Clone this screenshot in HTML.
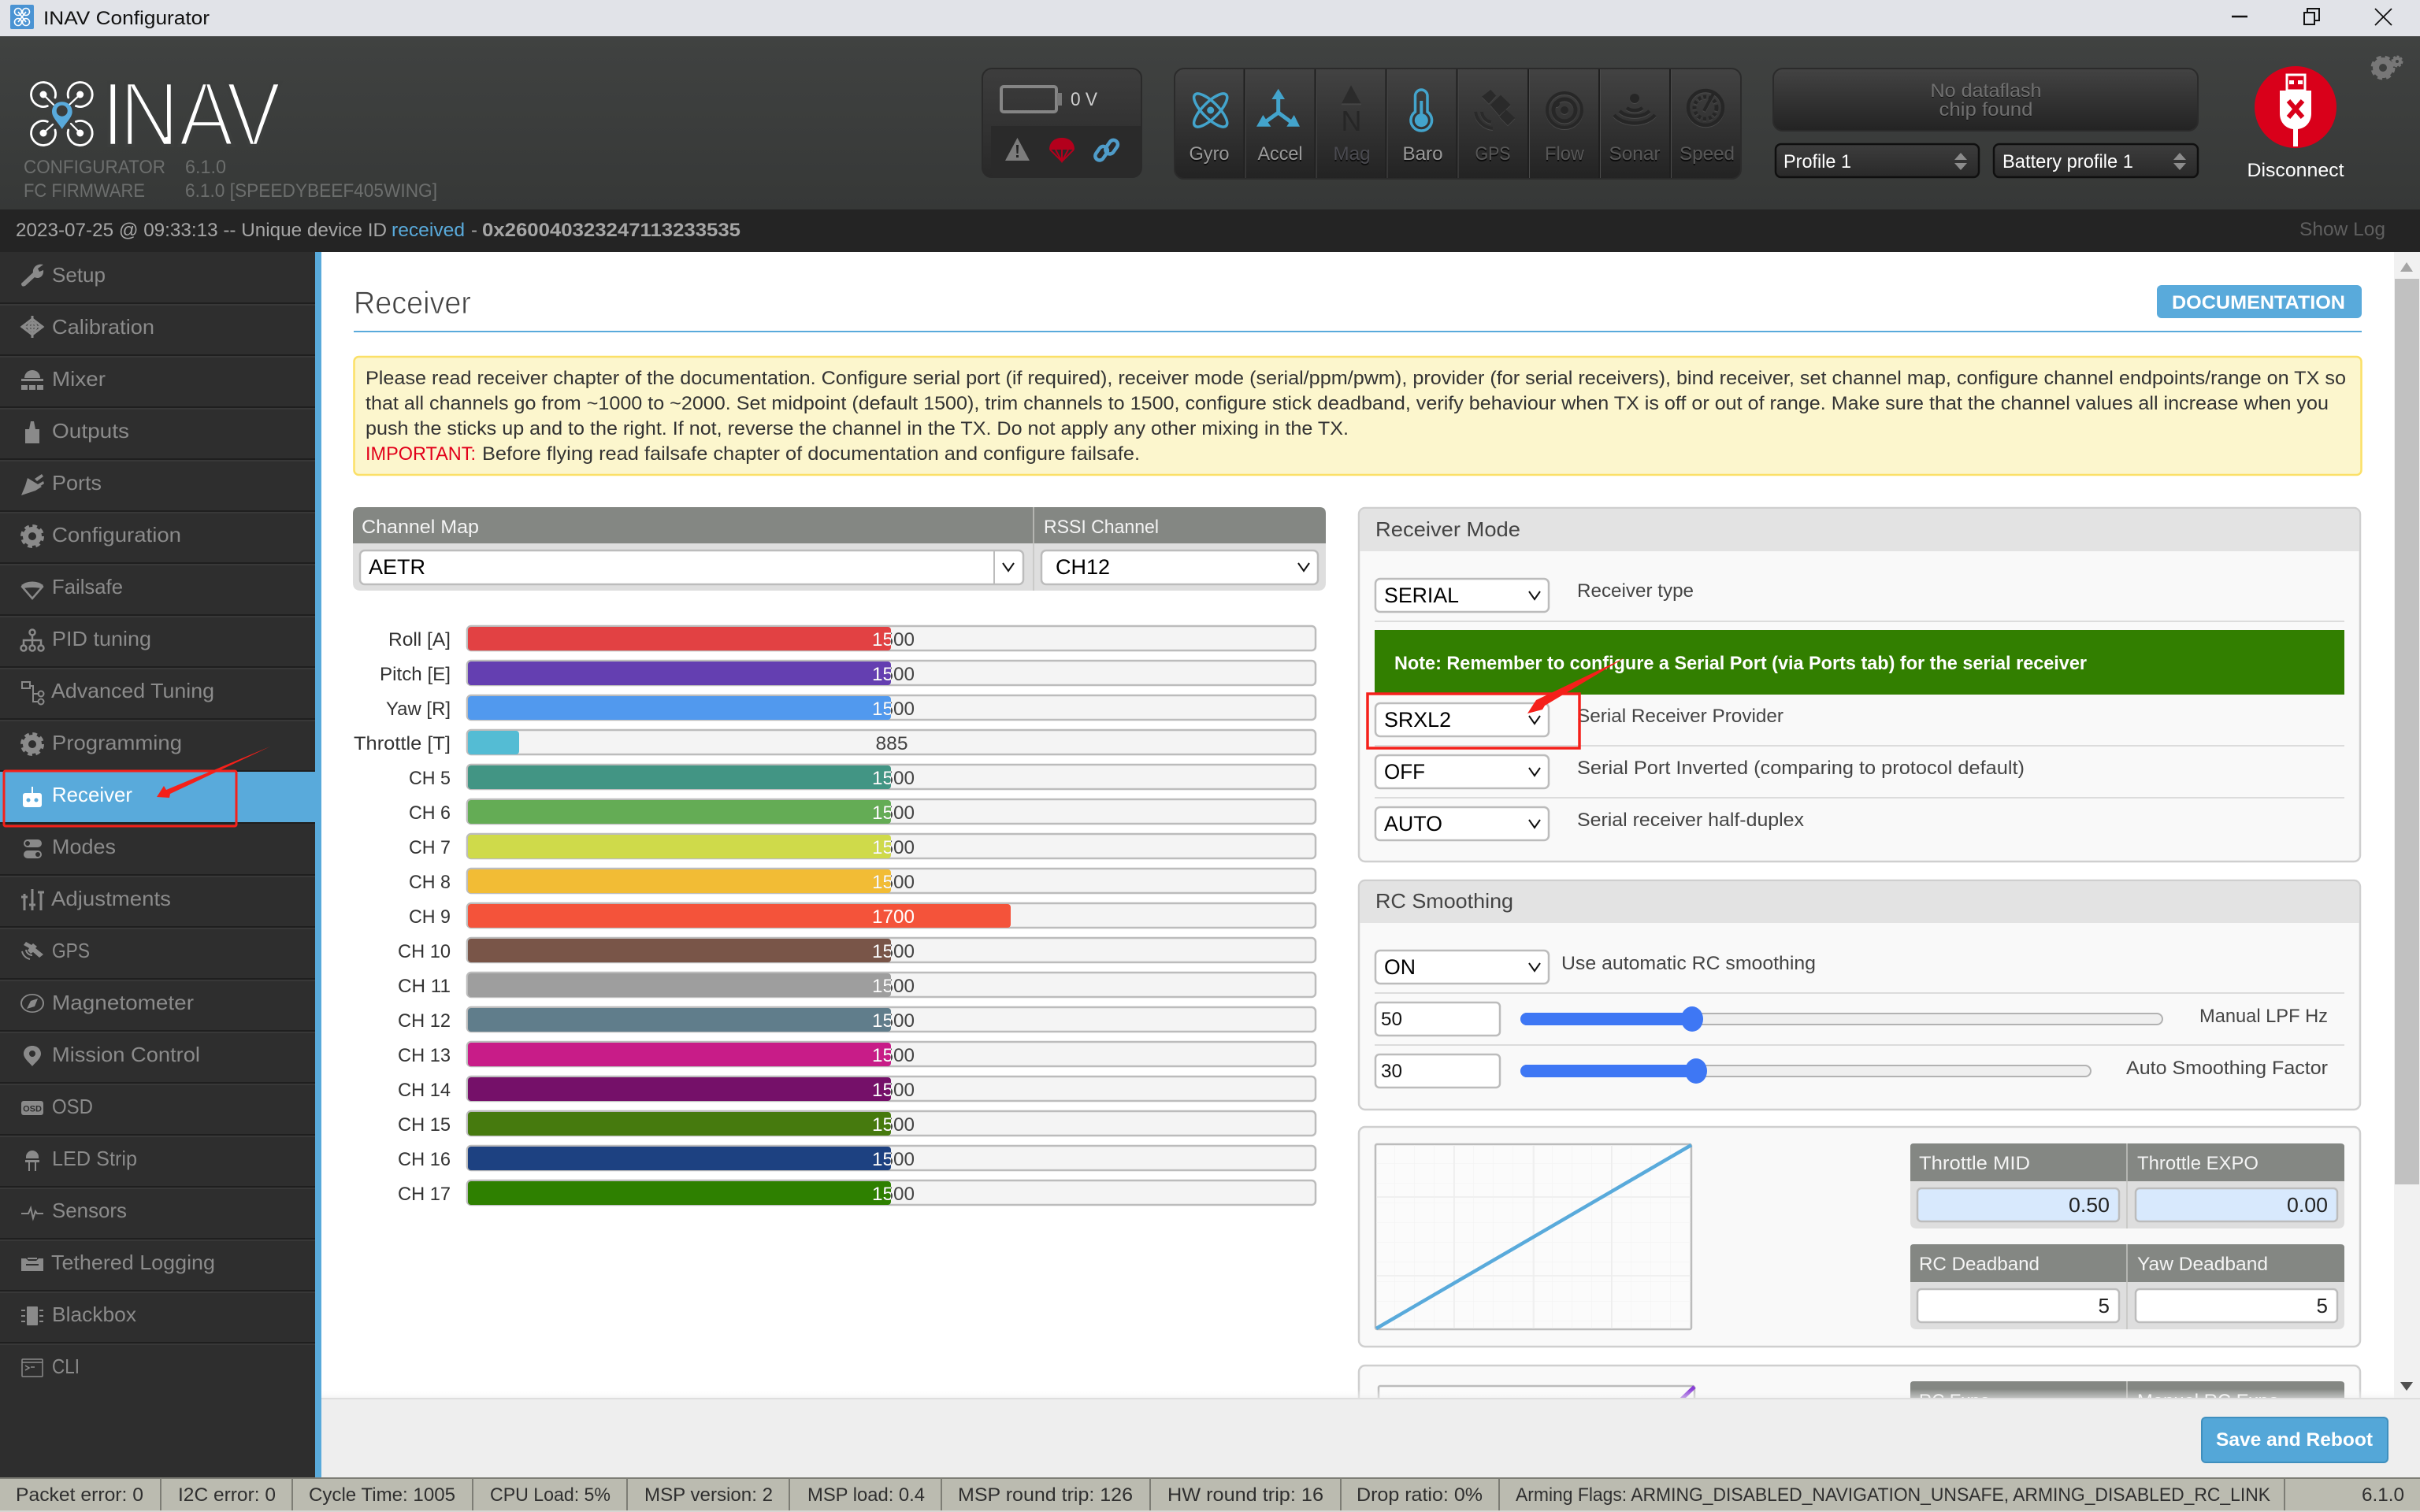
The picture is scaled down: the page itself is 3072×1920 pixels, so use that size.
<!DOCTYPE html>
<html><head><meta charset="utf-8"><title>INAV Configurator</title>
<style>
html,body{margin:0;padding:0;background:#fff;width:3072px;height:1920px;overflow:hidden}
svg{display:block;font-family:"Liberation Sans",sans-serif}
.s{fill:#8b8b8b;font-size:26px}
.n{fill:#333;font-size:24px}
.st{fill:#2f2f2f;font-size:24px}
.hd{fill:#f4f4f4;font-size:24px}
.sel{fill:#000;font-size:27px}
.lab{fill:#444;font-size:24px}
.box{fill:#fff;stroke:#bcbcbc;stroke-width:2.5}
.val{fill:#444;font-size:24px}
</style></head><body>
<svg width="3072" height="1920" viewBox="0 0 3072 1920" xmlns="http://www.w3.org/2000/svg">
<defs>
<linearGradient id="hdr" x1="0" y1="0" x2="0" y2="1"><stop offset="0" stop-color="#404241"/><stop offset="1" stop-color="#363837"/></linearGradient>
<linearGradient id="g1" x1="0" y1="0" x2="0" y2="1"><stop offset="0" stop-color="#434343"/><stop offset="1" stop-color="#232323"/></linearGradient>
<linearGradient id="g2" x1="0" y1="0" x2="0" y2="1"><stop offset="0" stop-color="#3d3d3d"/><stop offset="1" stop-color="#292929"/></linearGradient>
<linearGradient id="fade" x1="0" y1="0" x2="0" y2="1"><stop offset="0" stop-color="#fff" stop-opacity="0"/><stop offset="1" stop-color="#eee" stop-opacity=".6"/></linearGradient>
<path id="chev" d="M-7 -5 L0 5 L7 -5" fill="none" stroke="#111" stroke-width="2"/>
<clipPath id="fill50"><rect x="0" y="0" width="1131" height="1920"/></clipPath>
<pattern id="grid" width="25" height="25" patternUnits="userSpaceOnUse" x="1745" y="1452"><path d="M25 0H0V25" fill="none" stroke="#f2f2f2" stroke-width="1"/></pattern>
</defs>

<!-- title bar -->
<rect width="3072" height="46" fill="#e1e3e8"/>
<rect x="13" y="6" width="30" height="31" rx="2" fill="#4a93d3"/>
<g fill="none" stroke="#fff" stroke-width="1.6"><circle cx="23" cy="15" r="4.5"/><circle cx="33" cy="15" r="4.5"/><circle cx="23" cy="28" r="4.5"/><circle cx="33" cy="28" r="4.5"/><path d="M23 15L33 28M33 15L23 28"/></g>
<text x="55" y="31" font-size="24" fill="#111" textLength="211" lengthAdjust="spacingAndGlyphs">INAV Configurator</text>
<path d="M2833 21H2853" stroke="#111" stroke-width="2.5"/>
<path d="M2925 16H2938V31H2925ZM2929 16V11H2944V26H2938" fill="none" stroke="#111" stroke-width="2"/>
<path d="M3015 11L3036 32M3036 11L3015 32" stroke="#111" stroke-width="1.8"/>

<!-- header -->
<rect y="46" width="3072" height="221" fill="url(#hdr)"/>
<rect y="266" width="3072" height="54" fill="#242424"/>

<!-- logo -->
<g fill="none" stroke="#fff" stroke-width="2.8" stroke-linecap="round">
<path d="M70 124A15.500 15.500 0 1 0 60.300 134.600"/>
<path d="M86.700 124A15.500 15.500 0 1 1 96.400 134.600"/>
<path d="M70 165A15.500 15.500 0 1 1 60.300 154.400"/>
<path d="M86.700 165A15.500 15.500 0 1 0 96.400 154.400"/>
<path d="M55 120L68 133M101.700 120L88 133M55 169L67 158M101.700 169L90 157" stroke-width="2.200"/>
</g>
<g fill="#fff"><circle cx="55" cy="120" r="4.500"/><circle cx="101.700" cy="120" r="4.500"/><circle cx="55" cy="169" r="4.500"/><circle cx="101.700" cy="169" r="4.500"/></g>
<path d="M78.800 129.300C71 129.300 66 135 66 142C66 149 74 156 78.800 164C83.600 156 91.700 149 91.700 142C91.700 135 86.600 129.300 78.800 129.300Z" fill="#59aadb"/>
<circle cx="78.700" cy="140.700" r="7" fill="#3a3c3b"/>
<text transform="scale(.9,1)" x="143.100 168.700 252.200 318.900" y="185" font-size="116" fill="#fff" stroke="#3c3e3d" stroke-width="4.500">INAV</text>

<g font-size="24" fill="#6c6e6d">
<text x="30" y="220" textLength="180" lengthAdjust="spacingAndGlyphs">CONFIGURATOR</text>
<text x="235" y="220" textLength="52" lengthAdjust="spacingAndGlyphs">6.1.0</text>
<text x="30" y="250" textLength="154" lengthAdjust="spacingAndGlyphs">FC FIRMWARE</text>
<text x="235" y="250" textLength="320" lengthAdjust="spacingAndGlyphs">6.1.0 [SPEEDYBEEF405WING]</text>
</g>
<g font-size="24" fill="#a6a6a6">
<text x="20" y="300" textLength="471" lengthAdjust="spacingAndGlyphs">2023-07-25 @ 09:33:13 -- Unique device ID</text>
<text x="497" y="300" fill="#59aadb" textLength="93" lengthAdjust="spacingAndGlyphs">received</text>
<text x="598" y="300">-</text>
<text x="612" y="300" font-weight="bold" textLength="328" lengthAdjust="spacingAndGlyphs">0x260040323247113233535</text>
</g>

<!-- battery box -->
<rect x="1247" y="87" width="202" height="138" rx="12" fill="url(#g2)" stroke="#2a2a2a" stroke-width="2"/>
<path d="M1258 160H1448V214Q1448 224 1438 224H1264Q1258 224 1258 214Z" fill="#2a2a2a"/>
<rect x="1271" y="110" width="70" height="32" rx="3" fill="none" stroke="#858585" stroke-width="4"/>
<rect x="1342" y="118" width="6" height="16" fill="#777"/>
<text x="1359" y="134" font-size="24" fill="#cfcfcf" textLength="34" lengthAdjust="spacingAndGlyphs">0 V</text>
<path d="M1291.500 175L1307 204H1276Z" fill="#7c7c7c"/><path d="M1290 184h3l-.5 11h-2zM1290 197h3v3h-3z" fill="#222"/>
<path d="M1332 190C1332 180 1339 175 1348 175C1357 175 1364 180 1364 190Z" fill="#b3001c"/>
<path d="M1333 190L1348 205L1363 190M1340 190L1348 205L1356 190M1348 190V205" stroke="#b3001c" stroke-width="2" fill="none"/>
<g fill="none" stroke="#4f9cc9" stroke-width="4.500"><rect x="1406" y="177" width="11" height="19" rx="5.500" transform="rotate(35 1411 186)"/><rect x="1393" y="185" width="11" height="19" rx="5.500" transform="rotate(35 1398 194)"/></g>

<!-- sensors box -->
<rect x="1491" y="87" width="719" height="140" rx="12" fill="url(#g1)" stroke="#2b2b2b" stroke-width="2"/>
<path d="M1579.500 88V226M1669.500 88V226M1759.500 88V226M1849.500 88V226M1940 88V226M2030 88V226M2120 88V226" stroke="#1f1f1f" stroke-width="2"/>
<path d="M1581 88V226M1671 88V226M1761 88V226M1851 88V226M1941.500 88V226M2031.500 88V226M2121.500 88V226" stroke="#4a4a4a" stroke-width="1"/>
<!-- gyro -->
<g fill="none" stroke="#43a4cc" stroke-width="3.500"><ellipse cx="1536.700" cy="140" rx="10" ry="28" transform="rotate(-45 1536.700 140)"/><ellipse cx="1536.700" cy="140" rx="10" ry="28" transform="rotate(45 1536.700 140)"/></g>
<circle cx="1536.700" cy="140" r="8" fill="#363636"/><circle cx="1536.700" cy="140" r="4.500" fill="#43a4cc"/>
<!-- accel -->
<path d="M1622.700 112.700L1631 126H1614.400Z" fill="#43a4cc"/>
<path d="M1622.700 124V143L1606 155M1622.700 143L1639 155" fill="none" stroke="#43a4cc" stroke-width="5"/>
<path d="M1595 160.700H1613.300L1603.300 146ZM1650 160.700H1633.300L1642.700 146Z" fill="#43a4cc"/>
<!-- mag -->
<path d="M1715 108.300L1727.300 131H1703.300Z" fill="#2b2b2b"/><path d="M1703 132.500H1728" stroke="#454545" stroke-width="1.500"/>
<text x="1715.500" y="166" font-size="36" text-anchor="middle" fill="#262626">N</text>
<!-- baro -->
<path d="M1796.500 141.900V121.800A7.750 7.750 0 0 1 1812 121.800V141.900A13.300 13.300 0 1 1 1796.500 141.900Z" fill="none" stroke="#43a4cc" stroke-width="3.500"/>
<rect x="1802.300" y="128" width="4" height="20" fill="#43a4cc"/><circle cx="1804.300" cy="152.700" r="8.500" fill="#43a4cc"/>
<g style="filter:drop-shadow(0 1px 0 #4a4a4a)">
<!-- gps -->
<g fill="#2a2a2a"><path d="M1892.300 114L1899.300 121.700L1890 131.700L1881 122.700Z"/><path d="M1905 120.700L1917.700 133.300L1903.300 146.700L1891.700 133.300Z"/><path d="M1911.700 139.300L1923.300 150L1914 159.300L1903.300 148.300Z"/></g>
<path d="M1873 142A24 24 0 0 0 1895 163M1881 142A14 14 0 0 0 1893 155" fill="none" stroke="#2a2a2a" stroke-width="4"/>
<!-- flow -->
<g fill="none" stroke="#272727"><circle cx="1986" cy="140" r="22" stroke-width="4"/><circle cx="1986" cy="140" r="14" stroke-width="5"/></g><circle cx="1986" cy="140" r="5" fill="#272727"/><circle cx="1976" cy="132" r="4" fill="#272727"/>
<!-- sonar -->
<circle cx="2075" cy="125" r="6" fill="#262626"/>
<g fill="none" stroke="#262626" stroke-width="4.500"><path d="M2065 137A14 11 0 0 0 2085 137"/><path d="M2056 141A24 17 0 0 0 2094 141"/><path d="M2049 146A30 21 0 0 0 2101 146"/></g>
<!-- speed -->
<circle cx="2165" cy="137" r="22" fill="none" stroke="#262626" stroke-width="4.500"/><circle cx="2165" cy="137" r="14" fill="none" stroke="#262626" stroke-width="5" stroke-dasharray="4 3"/><path d="M2163 141L2175 119" stroke="#262626" stroke-width="4"/>
</g>
<g style="filter:drop-shadow(0 2px 0 #0b0b0b)" font-size="24" text-anchor="middle">
<text x="1535" y="203" fill="#9a9a9a" textLength="51" lengthAdjust="spacingAndGlyphs">Gyro</text>
<text x="1625" y="203" fill="#9a9a9a" textLength="57" lengthAdjust="spacingAndGlyphs">Accel</text>
<text x="1716" y="203" fill="#4a4a50" textLength="47" lengthAdjust="spacingAndGlyphs">Mag</text>
<text x="1806" y="203" fill="#9a9a9a" textLength="51" lengthAdjust="spacingAndGlyphs">Baro</text>
<text x="1895" y="203" fill="#575757" textLength="45" lengthAdjust="spacingAndGlyphs">GPS</text>
<text x="1986" y="203" fill="#575757" textLength="50" lengthAdjust="spacingAndGlyphs">Flow</text>
<text x="2075" y="203" fill="#575757" textLength="65" lengthAdjust="spacingAndGlyphs">Sonar</text>
<text x="2167" y="203" fill="#575757" textLength="70" lengthAdjust="spacingAndGlyphs">Speed</text>
</g>

<!-- dataflash -->
<rect x="2251" y="87" width="539" height="79" rx="12" fill="url(#g1)" stroke="#2b2b2b" stroke-width="2"/>
<g font-size="24" fill="#707070" text-anchor="middle" style="filter:drop-shadow(0 1px 0 #111)">
<text x="2521" y="123" textLength="141" lengthAdjust="spacingAndGlyphs">No dataflash</text>
<text x="2521" y="147" textLength="119" lengthAdjust="spacingAndGlyphs">chip found</text>
</g>
<!-- profile selects -->
<rect x="2254" y="183" width="258" height="42" rx="7" fill="url(#g2)" stroke="#0f0f0f" stroke-width="2.500"/>
<rect x="2531" y="183" width="259" height="42" rx="7" fill="url(#g2)" stroke="#0f0f0f" stroke-width="2.500"/>
<g font-size="24" fill="#fff">
<text x="2264" y="213" textLength="86" lengthAdjust="spacingAndGlyphs">Profile 1</text>
<text x="2542" y="213" textLength="166" lengthAdjust="spacingAndGlyphs">Battery profile 1</text>
</g>
<path d="M2489 194L2497 203H2481ZM2489 216L2497 207H2481ZM2767 194L2775 203H2759ZM2767 216L2775 207H2759Z" fill="#8c8c8c"/>
<!-- disconnect -->
<circle cx="2914" cy="136" r="52" fill="#d9001a"/>
<rect x="2903" y="95" width="23" height="20" fill="none" stroke="#fff" stroke-width="3"/>
<rect x="2906" y="102" width="6" height="5" fill="#fff"/><rect x="2917" y="102" width="6" height="5" fill="#fff"/>
<path d="M2894 115H2934V144C2934 156 2926 163 2917 164V186H2911V164C2902 163 2894 156 2894 144Z" fill="#fff"/>
<path d="M2905 128L2923 149M2923 128L2905 149" stroke="#d9001a" stroke-width="6"/>
<text x="2914" y="224" font-size="24" fill="#fff" text-anchor="middle" textLength="123" lengthAdjust="spacingAndGlyphs">Disconnect</text>
<!-- gear -->
<circle cx="3025" cy="86" r="9" fill="none" stroke="#777" stroke-width="8"/><circle cx="3025" cy="86" r="13.500" fill="none" stroke="#777" stroke-width="4" stroke-dasharray="6 5"/>
<circle cx="3043" cy="78" r="4" fill="none" stroke="#777" stroke-width="4"/><circle cx="3043" cy="78" r="6.500" fill="none" stroke="#777" stroke-width="2" stroke-dasharray="3 2"/>
<text x="3028" y="299" font-size="24" fill="#5f5f5f" text-anchor="end" textLength="109" lengthAdjust="spacingAndGlyphs">Show Log</text>

<!-- sidebar -->
<rect y="320" width="400" height="1556" fill="#2e2e2e"/>
<rect x="400" y="320" width="8" height="1556" fill="#59aadb"/>
<rect y="980" width="400" height="66" fill="#59aadb"/>
<path d="M0 385H400M0 451H400M0 517H400M0 583H400M0 649H400M0 715H400M0 781H400M0 847H400M0 913H400M0 979H400M0 1045H400M0 1111H400M0 1177H400M0 1243H400M0 1309H400M0 1375H400M0 1441H400M0 1507H400M0 1573H400M0 1639H400M0 1705H400" stroke="#1f1f1f" stroke-width="2"/>
<path d="M0 387H400M0 453H400M0 519H400M0 585H400M0 651H400M0 717H400M0 783H400M0 849H400M0 915H400M0 1113H400M0 1179H400M0 1245H400M0 1311H400M0 1377H400M0 1443H400M0 1509H400M0 1575H400M0 1641H400M0 1707H400" stroke="#3b3b3b" stroke-width="1.500"/>
<g transform="translate(-1,-2)">
<text class="s" x="67" y="360" textLength="68" lengthAdjust="spacingAndGlyphs">Setup</text>
<text class="s" x="67" y="426" textLength="130" lengthAdjust="spacingAndGlyphs">Calibration</text>
<text class="s" x="67" y="492" textLength="68" lengthAdjust="spacingAndGlyphs">Mixer</text>
<text class="s" x="67" y="558" textLength="98" lengthAdjust="spacingAndGlyphs">Outputs</text>
<text class="s" x="67" y="624" textLength="63" lengthAdjust="spacingAndGlyphs">Ports</text>
<text class="s" x="67" y="690" textLength="164" lengthAdjust="spacingAndGlyphs">Configuration</text>
<text class="s" x="67" y="756" textLength="90" lengthAdjust="spacingAndGlyphs">Failsafe</text>
<text class="s" x="67" y="822" textLength="126" lengthAdjust="spacingAndGlyphs">PID tuning</text>
<text class="s" x="66" y="888" textLength="207" lengthAdjust="spacingAndGlyphs">Advanced Tuning</text>
<text class="s" x="67" y="954" textLength="165" lengthAdjust="spacingAndGlyphs">Programming</text>
<text x="67" y="1020" style="fill:#fff;font-size:26px" textLength="102" lengthAdjust="spacingAndGlyphs">Receiver</text>
<text class="s" x="67" y="1086" textLength="81" lengthAdjust="spacingAndGlyphs">Modes</text>
<text class="s" x="66" y="1152" textLength="152" lengthAdjust="spacingAndGlyphs">Adjustments</text>
<text class="s" x="67" y="1218" textLength="48" lengthAdjust="spacingAndGlyphs">GPS</text>
<text class="s" x="67" y="1284" textLength="180" lengthAdjust="spacingAndGlyphs">Magnetometer</text>
<text class="s" x="67" y="1350" textLength="188" lengthAdjust="spacingAndGlyphs">Mission Control</text>
<text class="s" x="67" y="1416" textLength="52" lengthAdjust="spacingAndGlyphs">OSD</text>
<text class="s" x="67" y="1482" textLength="108" lengthAdjust="spacingAndGlyphs">LED Strip</text>
<text class="s" x="67" y="1548" textLength="95" lengthAdjust="spacingAndGlyphs">Sensors</text>
<text class="s" x="66" y="1614" textLength="208" lengthAdjust="spacingAndGlyphs">Tethered Logging</text>
<text class="s" x="67" y="1680" textLength="107" lengthAdjust="spacingAndGlyphs">Blackbox</text>
<text class="s" x="67" y="1746" textLength="35" lengthAdjust="spacingAndGlyphs">CLI</text>
</g>
<!-- sidebar icons -->
<g fill="#8a8a8a" stroke="none">
<path transform="translate(41,349)" d="M-14 11L1 -3C0 -9 6 -15 14 -13L7 -8L9 -4L14 -6C15 2 8 6 3 3L-9 14Q-14 16 -14 11Z"/>
<g transform="translate(41,415)" fill="none" stroke="#8a8a8a" stroke-width="3"><path d="M-13 0L0 -10L13 0L0 10Z"/><path d="M0 -14V14M-14 0H14"/><circle r="5"/></g>
<g transform="translate(41,483)"><path d="M-10 -3A10 10 0 0 1 10 -3Z"/><path d="M-14 -2H14V1H-14Z"/><rect x="-14" y="6" width="8" height="6"/><rect x="-4" y="6" width="8" height="6"/><rect x="6" y="6" width="8" height="6"/></g>
<path transform="translate(41,549)" d="M-2 -14H2L4 -4H9V14H-9V-4H-4Z"/>
<path transform="translate(41,615)" d="M-14 14L-9 2L-6 -8L12 3L4 8ZM3 -7L12 -13L14 -10L6 -4ZM7 0L14 -4L15 -1L9 3Z"/>
<g transform="translate(41,681)" fill="none" stroke="#8a8a8a"><circle r="8.500" stroke-width="7"/><circle r="12.500" stroke-width="5" stroke-dasharray="5.500 4.300"/></g>
<g transform="translate(41,747)" fill="none" stroke="#8a8a8a" stroke-width="2.500"><path d="M-13 -2C-9 -9 9 -9 13 -2L0 13Z"/><path d="M-13 -2C-6 -4 6 -4 13 -2" stroke-width="5"/></g>
<g transform="translate(41,813)" fill="none" stroke="#8a8a8a" stroke-width="2.500"><circle cy="-10" r="3.500"/><circle cx="-11" cy="10" r="3.500"/><circle cy="10" r="3.500"/><circle cx="11" cy="10" r="3.500"/><path d="M0 -6V6M-11 6V0H11V6"/></g>
<g transform="translate(41,879)" fill="none" stroke="#8a8a8a" stroke-width="2"><rect x="-13" y="-13" width="10" height="8"/><path d="M-3 -8H1V2H9M1 2V12H8"/><circle cx="11" cy="2" r="3.500"/><circle cx="11" cy="12" r="3.500"/></g>
<g transform="translate(41,945)" fill="none" stroke="#8a8a8a"><circle r="8.500" stroke-width="7"/><circle r="12.500" stroke-width="5" stroke-dasharray="5.500 4.300"/></g>
<g transform="translate(41,1013)"><rect x="-12" y="-6" width="24" height="18" rx="3" fill="#fff"/><rect x="-1" y="-14" width="2" height="9" fill="#fff"/><circle cx="-5" cy="3" r="2.500" fill="#59aadb"/><circle cx="5" cy="3" r="2.500" fill="#59aadb"/></g>
<g transform="translate(41,1077)"><rect x="-11" y="-11" width="23" height="10" rx="5"/><rect x="-11" y="3" width="23" height="10" rx="5"/><circle cx="7" cy="8" r="3" fill="#2e2e2e"/><circle cx="-6" cy="-6" r="3" fill="#2e2e2e"/></g>
<g transform="translate(41,1143)" fill="none" stroke="#8a8a8a" stroke-width="3"><path d="M-10 -8V13M-14 -4H-6"/><path d="M0 -14V13M-4 6H4"/><path d="M11 -10V13M7 -10H15"/></g>
<g transform="translate(41,1207)"><path d="M-8 -11L-1 -7L1 -9L6 -5L4 -3L14 5L9 9L1 2L-2 4L-6 0L-4 -3L-11 -7Z"/><path d="M-3 11A13 13 0 0 1 -13 1M0 6A8 8 0 0 1 -8 -1" fill="none" stroke="#8a8a8a" stroke-width="2"/></g>
<g transform="translate(41,1274)"><ellipse rx="14" ry="14" fill="none" stroke="#8a8a8a" stroke-width="2" transform="scale(1,.8)"/><path d="M7 -6L3 4L-7 7L-2 -3Z"/></g>
<path transform="translate(41,1341)" fill-rule="evenodd" d="M0 -13C-7 -13 -11 -8 -11 -3C-11 3 -4 8 0 13C4 8 11 3 11 -3C11 -8 7 -13 0 -13ZM0 -7A4 4 0 1 1 0 1A4 4 0 1 1 0 -7Z"/>
<g transform="translate(41,1407)"><rect x="-14" y="-9" width="28" height="18" rx="3"/><text x="0" y="4.500" text-anchor="middle" font-size="11" font-weight="bold" fill="#2e2e2e">OSD</text></g>
<g transform="translate(41,1473)"><path d="M-8 -2V-4A8 8 0 0 1 8 -4V-2Z"/><rect x="-9" y="0" width="18" height="3"/><rect x="-5" y="3" width="2" height="11"/><rect x="3" y="3" width="2" height="11"/></g>
<path transform="translate(41,1540)" d="M-14 1H-5L-2 -6L1 7L4 -2L6 1H14" fill="none" stroke="#8a8a8a" stroke-width="2"/>
<g transform="translate(41,1605)"><path d="M-14 -7H-8L-5 -4H5L8 -7H14V9H-14Z"/><rect x="-8" y="0" width="16" height="2" fill="#2e2e2e"/><rect x="-6" y="-8" width="12" height="2"/></g>
<g transform="translate(41,1671)"><rect x="-7" y="-12" width="14" height="24" rx="1"/><path d="M-14 -7H-9M-14 0H-9M-14 7H-9M9 -7H14M9 0H14M9 7H14" stroke="#8a8a8a" stroke-width="2"/></g>
<g transform="translate(41,1737)" fill="none" stroke="#8a8a8a" stroke-width="1.500"><rect x="-13" y="-11" width="26" height="22" rx="1"/><path d="M-13 -7H13M-9 -3L-4 0L-9 3M-2 -1H3"/></g>
</g>
<!-- sidebar annotation -->
<rect x="5" y="979" width="295" height="70" fill="none" stroke="#f5201a" stroke-width="3" rx="2"/>
<path d="M343 948L211 1003L208 998L199 1012L215 1013L216 1008Z" fill="#f5201a"/>

<!-- main title -->
<text x="449" y="398" font-size="40" fill="#444" stroke="#fff" stroke-width=".8" textLength="149" lengthAdjust="spacingAndGlyphs">Receiver</text>
<rect x="449" y="420" width="2549" height="2" fill="#59aadb"/>
<rect x="2738" y="362" width="260" height="42" rx="6" fill="#59aadb"/>
<text x="2757" y="392" font-size="24" font-weight="bold" fill="#fff" textLength="220" lengthAdjust="spacingAndGlyphs">DOCUMENTATION</text>

<!-- note -->
<rect x="449.500" y="453" width="2548" height="150" rx="6" fill="#fcf6cd" stroke="#fbe067" stroke-width="2.500"/>
<g>
<text class="n" x="464" y="488" textLength="2514" lengthAdjust="spacingAndGlyphs">Please read receiver chapter of the documentation. Configure serial port (if required), receiver mode (serial/ppm/pwm), provider (for serial receivers), bind receiver, set channel map, configure channel endpoints/range on TX so</text>
<text class="n" x="464" y="520" textLength="2492" lengthAdjust="spacingAndGlyphs">that all channels go from ~1000 to ~2000. Set midpoint (default 1500), trim channels to 1500, configure stick deadband, verify behaviour when TX is off or out of range. Make sure that the channel values all increase when you</text>
<text class="n" x="464" y="552" textLength="1248" lengthAdjust="spacingAndGlyphs">push the sticks up and to the right. If not, reverse the channel in the TX. Do not apply any other mixing in the TX.</text>
<text x="464" y="584" font-size="24" fill="#e2001a" textLength="140" lengthAdjust="spacingAndGlyphs">IMPORTANT:</text>
<text class="n" x="612" y="584" textLength="835" lengthAdjust="spacingAndGlyphs">Before flying read failsafe chapter of documentation and configure failsafe.</text>
</g>

<!-- channel map table -->
<path d="M448 690V652Q448 644 456 644H1675Q1683 644 1683 652V690Z" fill="#848783"/>
<path d="M448 690H1683V740Q1683 750 1673 750H458Q448 750 448 740Z" fill="#dedede"/>
<path d="M1312 644V750" stroke="#c4c4c0" stroke-width="1.500"/>
<text class="hd" x="459" y="677" textLength="149" lengthAdjust="spacingAndGlyphs">Channel Map</text>
<text class="hd" x="1325" y="677" textLength="146" lengthAdjust="spacingAndGlyphs">RSSI Channel</text>
<rect class="box" x="457" y="699" width="842" height="43" rx="6"/>
<path d="M1262 699V742" stroke="#bcbcbc" stroke-width="2"/>
<use href="#chev" x="1280" y="720"/>
<text class="sel" x="468" y="729" textLength="72" lengthAdjust="spacingAndGlyphs">AETR</text>
<rect class="box" x="1322" y="699" width="351" height="43" rx="6"/>
<use href="#chev" x="1655" y="720"/>
<text class="sel" x="1340" y="729" textLength="69" lengthAdjust="spacingAndGlyphs">CH12</text>

<!-- bars -->
<g fill="#f4f4f4" stroke="#bcbcbc" stroke-width="2.500">
<rect x="593" y="795" width="1077" height="31" rx="5"/><rect x="593" y="839" width="1077" height="31" rx="5"/><rect x="593" y="883" width="1077" height="31" rx="5"/><rect x="593" y="927" width="1077" height="31" rx="5"/><rect x="593" y="971" width="1077" height="31" rx="5"/><rect x="593" y="1015" width="1077" height="31" rx="5"/><rect x="593" y="1059" width="1077" height="31" rx="5"/><rect x="593" y="1103" width="1077" height="31" rx="5"/><rect x="593" y="1147" width="1077" height="31" rx="5"/><rect x="593" y="1191" width="1077" height="31" rx="5"/><rect x="593" y="1235" width="1077" height="31" rx="5"/><rect x="593" y="1279" width="1077" height="31" rx="5"/><rect x="593" y="1323" width="1077" height="31" rx="5"/><rect x="593" y="1367" width="1077" height="31" rx="5"/><rect x="593" y="1411" width="1077" height="31" rx="5"/><rect x="593" y="1455" width="1077" height="31" rx="5"/><rect x="593" y="1499" width="1077" height="31" rx="5"/>
</g>
<g>
<rect x="594" y="796" width="537" height="30" rx="4" fill="#e24143"/>
<rect x="594" y="840" width="537" height="30" rx="4" fill="#643fb1"/>
<rect x="594" y="884" width="537" height="30" rx="4" fill="#5199ee"/>
<rect x="594" y="928" width="65" height="30" rx="4" fill="#54bcd4"/>
<rect x="594" y="972" width="537" height="30" rx="4" fill="#429584"/>
<rect x="594" y="1016" width="537" height="30" rx="4" fill="#64ac55"/>
<rect x="594" y="1060" width="537" height="30" rx="4" fill="#cfda4a"/>
<rect x="594" y="1104" width="537" height="30" rx="4" fill="#f2bc35"/>
<rect x="594" y="1148" width="689" height="30" rx="4" fill="#f4533a"/>
<rect x="594" y="1192" width="537" height="30" rx="4" fill="#795548"/>
<rect x="594" y="1236" width="537" height="30" rx="4" fill="#9e9e9e"/>
<rect x="594" y="1280" width="537" height="30" rx="4" fill="#607d8b"/>
<rect x="594" y="1324" width="537" height="30" rx="4" fill="#c81c88"/>
<rect x="594" y="1368" width="537" height="30" rx="4" fill="#751069"/>
<rect x="594" y="1412" width="537" height="30" rx="4" fill="#467a0e"/>
<rect x="594" y="1456" width="537" height="30" rx="4" fill="#1d4181"/>
<rect x="594" y="1500" width="537" height="30" rx="4" fill="#2e8000"/>
</g>
<g>
<text class="val" x="1134" y="820" text-anchor="middle" textLength="54" lengthAdjust="spacingAndGlyphs">1500</text>
<text class="val" x="1134" y="864" text-anchor="middle" textLength="54" lengthAdjust="spacingAndGlyphs">1500</text>
<text class="val" x="1134" y="908" text-anchor="middle" textLength="54" lengthAdjust="spacingAndGlyphs">1500</text>
<text class="val" x="1132" y="952" text-anchor="middle" textLength="41" lengthAdjust="spacingAndGlyphs">885</text>
<text class="val" x="1134" y="996" text-anchor="middle" textLength="54" lengthAdjust="spacingAndGlyphs">1500</text>
<text class="val" x="1134" y="1040" text-anchor="middle" textLength="54" lengthAdjust="spacingAndGlyphs">1500</text>
<text class="val" x="1134" y="1084" text-anchor="middle" textLength="54" lengthAdjust="spacingAndGlyphs">1500</text>
<text class="val" x="1134" y="1128" text-anchor="middle" textLength="54" lengthAdjust="spacingAndGlyphs">1500</text>
<text x="1134" y="1172" text-anchor="middle" font-size="24" fill="#fff" textLength="54" lengthAdjust="spacingAndGlyphs">1700</text>
<text class="val" x="1134" y="1216" text-anchor="middle" textLength="54" lengthAdjust="spacingAndGlyphs">1500</text>
<text class="val" x="1134" y="1260" text-anchor="middle" textLength="54" lengthAdjust="spacingAndGlyphs">1500</text>
<text class="val" x="1134" y="1304" text-anchor="middle" textLength="54" lengthAdjust="spacingAndGlyphs">1500</text>
<text class="val" x="1134" y="1348" text-anchor="middle" textLength="54" lengthAdjust="spacingAndGlyphs">1500</text>
<text class="val" x="1134" y="1392" text-anchor="middle" textLength="54" lengthAdjust="spacingAndGlyphs">1500</text>
<text class="val" x="1134" y="1436" text-anchor="middle" textLength="54" lengthAdjust="spacingAndGlyphs">1500</text>
<text class="val" x="1134" y="1480" text-anchor="middle" textLength="54" lengthAdjust="spacingAndGlyphs">1500</text>
<text class="val" x="1134" y="1524" text-anchor="middle" textLength="54" lengthAdjust="spacingAndGlyphs">1500</text>
</g>
<g clip-path="url(#fill50)" font-size="24" fill="#fff" text-anchor="middle">
<text x="1134" y="820" textLength="54" lengthAdjust="spacingAndGlyphs">1500</text>
<text x="1134" y="864" textLength="54" lengthAdjust="spacingAndGlyphs">1500</text>
<text x="1134" y="908" textLength="54" lengthAdjust="spacingAndGlyphs">1500</text>
<text x="1134" y="996" textLength="54" lengthAdjust="spacingAndGlyphs">1500</text>
<text x="1134" y="1040" textLength="54" lengthAdjust="spacingAndGlyphs">1500</text>
<text x="1134" y="1084" textLength="54" lengthAdjust="spacingAndGlyphs">1500</text>
<text x="1134" y="1128" textLength="54" lengthAdjust="spacingAndGlyphs">1500</text>
<text x="1134" y="1216" textLength="54" lengthAdjust="spacingAndGlyphs">1500</text>
<text x="1134" y="1260" textLength="54" lengthAdjust="spacingAndGlyphs">1500</text>
<text x="1134" y="1304" textLength="54" lengthAdjust="spacingAndGlyphs">1500</text>
<text x="1134" y="1348" textLength="54" lengthAdjust="spacingAndGlyphs">1500</text>
<text x="1134" y="1392" textLength="54" lengthAdjust="spacingAndGlyphs">1500</text>
<text x="1134" y="1436" textLength="54" lengthAdjust="spacingAndGlyphs">1500</text>
<text x="1134" y="1480" textLength="54" lengthAdjust="spacingAndGlyphs">1500</text>
<text x="1134" y="1524" textLength="54" lengthAdjust="spacingAndGlyphs">1500</text>
</g>
<g font-size="24" fill="#333" text-anchor="end">
<text x="572" y="820" textLength="79" lengthAdjust="spacingAndGlyphs">Roll [A]</text>
<text x="572" y="864" textLength="90" lengthAdjust="spacingAndGlyphs">Pitch [E]</text>
<text x="572" y="908" textLength="82" lengthAdjust="spacingAndGlyphs">Yaw [R]</text>
<text x="572" y="952" textLength="123" lengthAdjust="spacingAndGlyphs">Throttle [T]</text>
<text x="572" y="996" textLength="53" lengthAdjust="spacingAndGlyphs">CH 5</text>
<text x="572" y="1040" textLength="53" lengthAdjust="spacingAndGlyphs">CH 6</text>
<text x="572" y="1084" textLength="53" lengthAdjust="spacingAndGlyphs">CH 7</text>
<text x="572" y="1128" textLength="53" lengthAdjust="spacingAndGlyphs">CH 8</text>
<text x="572" y="1172" textLength="53" lengthAdjust="spacingAndGlyphs">CH 9</text>
<text x="572" y="1216" textLength="67" lengthAdjust="spacingAndGlyphs">CH 10</text>
<text x="572" y="1260" textLength="67" lengthAdjust="spacingAndGlyphs">CH 11</text>
<text x="572" y="1304" textLength="67" lengthAdjust="spacingAndGlyphs">CH 12</text>
<text x="572" y="1348" textLength="67" lengthAdjust="spacingAndGlyphs">CH 13</text>
<text x="572" y="1392" textLength="67" lengthAdjust="spacingAndGlyphs">CH 14</text>
<text x="572" y="1436" textLength="67" lengthAdjust="spacingAndGlyphs">CH 15</text>
<text x="572" y="1480" textLength="67" lengthAdjust="spacingAndGlyphs">CH 16</text>
<text x="572" y="1524" textLength="67" lengthAdjust="spacingAndGlyphs">CH 17</text>
</g>

<!-- receiver mode panel -->
<rect x="1725" y="645" width="1271" height="449" rx="8" fill="#f9f9f9" stroke="#cfcfcf" stroke-width="2.500"/>
<path d="M1726 700V654Q1726 646 1734 646H2987Q2995 646 2995 654V700Z" fill="#e3e3e3"/>
<text x="1746" y="681" font-size="26" fill="#444" textLength="184" lengthAdjust="spacingAndGlyphs">Receiver Mode</text>
<rect class="box" x="1746" y="735" width="220" height="42" rx="6"/><use href="#chev" x="1948" y="756"/>
<text class="sel" x="1757" y="765" textLength="95" lengthAdjust="spacingAndGlyphs">SERIAL</text>
<text class="lab" x="2002" y="758" textLength="148" lengthAdjust="spacingAndGlyphs">Receiver type</text>
<rect x="1745" y="788" width="1231" height="2" fill="#dcdcdc"/>
<rect x="1745" y="800" width="1231" height="82" fill="#327f00"/>
<text x="1770" y="850" font-size="24" font-weight="bold" fill="#fff" textLength="879" lengthAdjust="spacingAndGlyphs">Note: Remember to configure a Serial Port (via Ports tab) for the serial receiver</text>
<rect class="box" x="1746" y="893" width="220" height="42" rx="6"/><use href="#chev" x="1948" y="914"/>
<text class="sel" x="1757" y="923" textLength="85" lengthAdjust="spacingAndGlyphs">SRXL2</text>
<text class="lab" x="2002" y="917" textLength="262" lengthAdjust="spacingAndGlyphs">Serial Receiver Provider</text>
<rect x="1745" y="946" width="1231" height="2" fill="#dcdcdc"/>
<rect class="box" x="1746" y="959" width="220" height="42" rx="6"/><use href="#chev" x="1948" y="980"/>
<text class="sel" x="1757" y="989" textLength="52" lengthAdjust="spacingAndGlyphs">OFF</text>
<text class="lab" x="2002" y="983" textLength="568" lengthAdjust="spacingAndGlyphs">Serial Port Inverted (comparing to protocol default)</text>
<rect x="1745" y="1012" width="1231" height="2" fill="#dcdcdc"/>
<rect class="box" x="1746" y="1025" width="220" height="42" rx="6"/><use href="#chev" x="1948" y="1046"/>
<text class="sel" x="1757" y="1055" textLength="74" lengthAdjust="spacingAndGlyphs">AUTO</text>
<text class="lab" x="2002" y="1049" textLength="288" lengthAdjust="spacingAndGlyphs">Serial receiver half-duplex</text>
<rect x="1736" y="881" width="269" height="69" fill="none" stroke="#f5201a" stroke-width="3.500"/>
<path d="M2063 835L1950 889L1948 892L1939 906L1958 901L1961 896Z" fill="#f5201a"/>

<!-- rc smoothing -->
<rect x="1725" y="1118" width="1271" height="291" rx="8" fill="#f9f9f9" stroke="#cfcfcf" stroke-width="2.500"/>
<path d="M1726 1172V1127Q1726 1119 1734 1119H2987Q2995 1119 2995 1127V1172Z" fill="#e3e3e3"/>
<text x="1746" y="1153" font-size="26" fill="#444" textLength="175" lengthAdjust="spacingAndGlyphs">RC Smoothing</text>
<rect class="box" x="1746" y="1207" width="220" height="42" rx="6"/><use href="#chev" x="1948" y="1228"/>
<text class="sel" x="1757" y="1237" textLength="40" lengthAdjust="spacingAndGlyphs">ON</text>
<text class="lab" x="1982" y="1231" textLength="323" lengthAdjust="spacingAndGlyphs">Use automatic RC smoothing</text>
<rect x="1745" y="1260" width="1231" height="2" fill="#dcdcdc"/>
<rect class="box" x="1746" y="1273" width="158" height="42" rx="5"/>
<text x="1753" y="1302" font-size="24" fill="#111" textLength="27" lengthAdjust="spacingAndGlyphs">50</text>
<rect x="1931" y="1287" width="814" height="14" rx="7" fill="#efefef" stroke="#b2b2b2" stroke-width="2"/>
<rect x="1930" y="1286" width="218" height="16" rx="8" fill="#3e77f4"/>
<ellipse cx="2148" cy="1294" rx="14" ry="16" fill="#3e77f4"/>
<text class="lab" x="2955" y="1298" text-anchor="end" textLength="163" lengthAdjust="spacingAndGlyphs">Manual LPF Hz</text>
<rect x="1745" y="1326" width="1231" height="2" fill="#dcdcdc"/>
<rect class="box" x="1746" y="1339" width="158" height="42" rx="5"/>
<text x="1753" y="1368" font-size="24" fill="#111" textLength="27" lengthAdjust="spacingAndGlyphs">30</text>
<rect x="1931" y="1353" width="723" height="14" rx="7" fill="#efefef" stroke="#b2b2b2" stroke-width="2"/>
<rect x="1930" y="1352" width="223" height="16" rx="8" fill="#3e77f4"/>
<ellipse cx="2153" cy="1360" rx="14" ry="16" fill="#3e77f4"/>
<text class="lab" x="2955" y="1364" text-anchor="end" textLength="256" lengthAdjust="spacingAndGlyphs">Auto Smoothing Factor</text>

<!-- throttle panel -->
<rect x="1725" y="1431" width="1271" height="279" rx="8" fill="#f9f9f9" stroke="#cfcfcf" stroke-width="2.500"/>
<rect x="1746" y="1453" width="401" height="235" rx="2" fill="#fbfbfb" stroke="#bcbcbc" stroke-width="2.500"/>
<rect x="1747" y="1454" width="399" height="233" fill="url(#grid)"/>
<path d="M1846 1454V1687M1947 1454V1687M2046 1454V1687M1747 1520H2146M1747 1620H2146" stroke="#ededed" stroke-width="1.500"/>
<path d="M1747 1687L2147 1454" stroke="#59aadb" stroke-width="4.500"/>
<path d="M2425 1500V1456Q2425 1452 2429 1452H2971Q2976 1452 2976 1456V1500Z" fill="#848783"/>
<path d="M2425 1500H2976V1552Q2976 1560 2968 1560H2433Q2425 1560 2425 1552Z" fill="#dedede"/>
<path d="M2700 1452V1560" stroke="#c4c4c0" stroke-width="1.500"/>
<text class="hd" x="2436" y="1485" textLength="141" lengthAdjust="spacingAndGlyphs">Throttle MID</text>
<text class="hd" x="2713" y="1485" textLength="154" lengthAdjust="spacingAndGlyphs">Throttle EXPO</text>
<rect x="2434" y="1509" width="256" height="42" rx="5" fill="#d8e9fd" stroke="#bcbcbc" stroke-width="2.500"/>
<rect x="2711" y="1509" width="256" height="42" rx="5" fill="#d8e9fd" stroke="#bcbcbc" stroke-width="2.500"/>
<text x="2678" y="1539" font-size="26" fill="#222" text-anchor="end" textLength="52" lengthAdjust="spacingAndGlyphs">0.50</text>
<text x="2955" y="1539" font-size="26" fill="#222" text-anchor="end" textLength="52" lengthAdjust="spacingAndGlyphs">0.00</text>
<path d="M2425 1628V1584Q2425 1580 2429 1580H2971Q2976 1580 2976 1584V1628Z" fill="#848783"/>
<path d="M2425 1628H2976V1680Q2976 1688 2968 1688H2433Q2425 1688 2425 1680Z" fill="#dedede"/>
<path d="M2700 1580V1688" stroke="#c4c4c0" stroke-width="1.500"/>
<text class="hd" x="2436" y="1613" textLength="153" lengthAdjust="spacingAndGlyphs">RC Deadband</text>
<text class="hd" x="2713" y="1613" textLength="166" lengthAdjust="spacingAndGlyphs">Yaw Deadband</text>
<rect class="box" x="2434" y="1637" width="256" height="42" rx="5"/>
<rect class="box" x="2711" y="1637" width="256" height="42" rx="5"/>
<text x="2678" y="1667" font-size="26" fill="#222" text-anchor="end">5</text>
<text x="2955" y="1667" font-size="26" fill="#222" text-anchor="end">5</text>

<!-- rc expo panel (clipped by toolbar) -->
<rect x="1725" y="1734" width="1271" height="120" rx="8" fill="#f9f9f9" stroke="#cfcfcf" stroke-width="2.500"/>
<rect x="1750" y="1760" width="401" height="60" rx="2" fill="#fbfbfb" stroke="#bcbcbc" stroke-width="2.500"/>
<path d="M2126 1785L2151 1761" stroke="#8a3fd8" stroke-width="5"/>
<path d="M2425 1800V1758Q2425 1754 2429 1754H2971Q2976 1754 2976 1758V1800Z" fill="#848783"/>
<path d="M2700 1754V1800" stroke="#c4c4c0" stroke-width="1.500"/>
<text class="hd" x="2436" y="1787" textLength="90" lengthAdjust="spacingAndGlyphs">RC Expo</text>
<text class="hd" x="2713" y="1787" textLength="180" lengthAdjust="spacingAndGlyphs">Manual RC Expo</text>
<rect x="408" y="1764" width="2631" height="12" fill="url(#fade)"/>

<!-- scrollbar -->
<rect x="3039" y="320" width="33" height="1456" fill="#f1f1f1"/>
<rect x="3040" y="354" width="31" height="1150" fill="#c1c1c1"/>
<path d="M3055 333L3063 345H3047Z" fill="#a5a5a5"/>
<path d="M3055 1766L3063 1755H3047Z" fill="#505050"/>

<!-- toolbar -->
<rect x="408" y="1776" width="2664" height="100" fill="#eeeeee"/>
<rect x="408" y="1775" width="2664" height="2" fill="#dedede"/>
<rect x="2795" y="1800" width="236" height="57" rx="5" fill="#54a7d8" stroke="#3f8fbe" stroke-width="2"/>
<text x="2813" y="1836" font-size="24" font-weight="bold" fill="#fff" textLength="199" lengthAdjust="spacingAndGlyphs">Save and Reboot</text>

<!-- status bar -->
<rect y="1876" width="3072" height="44" fill="#bbbbb0"/>
<rect y="1876" width="3072" height="2" fill="#7d7d75"/>
<rect y="1918" width="3072" height="2" fill="#d6d6d2"/>
<path d="M204 1878V1918M371 1878V1918M600 1878V1918M796 1878V1918M1002 1878V1918M1195 1878V1918M1460 1878V1918M1702 1878V1918M1903 1878V1918M2900 1878V1918" stroke="#7d7d75" stroke-width="2"/>
<g>
<text class="st" x="20" y="1906" textLength="162" lengthAdjust="spacingAndGlyphs">Packet error: 0</text>
<text class="st" x="226" y="1906" textLength="124" lengthAdjust="spacingAndGlyphs">I2C error: 0</text>
<text class="st" x="392" y="1906" textLength="186" lengthAdjust="spacingAndGlyphs">Cycle Time: 1005</text>
<text class="st" x="622" y="1906" textLength="153" lengthAdjust="spacingAndGlyphs">CPU Load: 5%</text>
<text class="st" x="818" y="1906" textLength="163" lengthAdjust="spacingAndGlyphs">MSP version: 2</text>
<text class="st" x="1025" y="1906" textLength="149" lengthAdjust="spacingAndGlyphs">MSP load: 0.4</text>
<text class="st" x="1216" y="1906" textLength="222" lengthAdjust="spacingAndGlyphs">MSP round trip: 126</text>
<text class="st" x="1482" y="1906" textLength="198" lengthAdjust="spacingAndGlyphs">HW round trip: 16</text>
<text class="st" x="1722" y="1906" textLength="160" lengthAdjust="spacingAndGlyphs">Drop ratio: 0%</text>
<text class="st" x="1924" y="1906" textLength="958" lengthAdjust="spacingAndGlyphs">Arming Flags: ARMING_DISABLED_NAVIGATION_UNSAFE, ARMING_DISABLED_RC_LINK</text>
<text class="st" x="2998" y="1906" textLength="54" lengthAdjust="spacingAndGlyphs">6.1.0</text>
</g>
</svg>
</body></html>
